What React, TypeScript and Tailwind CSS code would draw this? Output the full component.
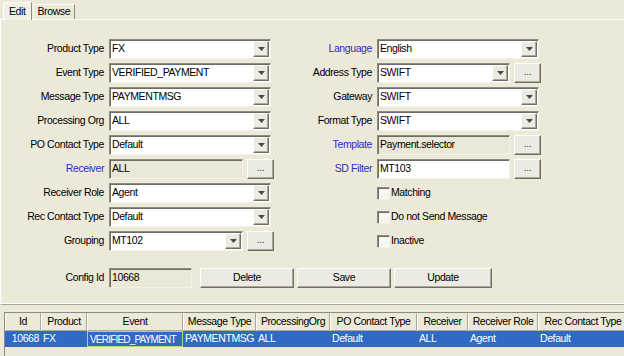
import React from 'react';

const sunken =
  'border border-t-[#8f8c7e] border-l-[#8f8c7e] border-r-[#f4f2e8] border-b-[#f4f2e8] shadow-[inset_1px_1px_0_#6f6d62]';
const raised =
  'border border-t-white border-l-white border-r-[#716f64] border-b-[#716f64] shadow-[inset_-1px_-1px_0_#aca899]';

function Arrow() {
  return (
    <div className={`h-[16px] w-[16px] mr-px bg-[#ecebe3] flex items-center justify-center ${raised}`}>
      <svg width="7" height="4" viewBox="0 0 7 4">
        <path d="M0 0h7L3.5 4z" fill="#4a4a4a" />
      </svg>
    </div>
  );
}

function Combo({ value, width }: { value: string; width: string }) {
  return (
    <div className={`h-5 ${width} bg-white flex items-center ${sunken}`}>
      <span className="flex-1 pl-[2px] whitespace-nowrap overflow-hidden">{value}</span>
      <Arrow />
    </div>
  );
}

function TextBox({ value, width, gray }: { value: string; width: string; gray?: boolean }) {
  return (
    <div className={`h-5 ${width} flex items-center pl-[2px] ${gray ? 'bg-[#ebe8d7]' : 'bg-white'} ${sunken}`}>
      {value}
    </div>
  );
}

function Dots() {
  return (
    <div className={`h-5 w-[27px] bg-[#ecebe3] flex items-center justify-center text-[#444] leading-none pb-[3px] ${raised}`}>
      ...
    </div>
  );
}

function Row({
  label,
  blue,
  labelWidth,
  children,
}: {
  label: string;
  blue?: boolean;
  labelWidth: string;
  children: React.ReactNode;
}) {
  return (
    <div className="flex items-center h-5">
      <div className={`${labelWidth} text-right whitespace-nowrap ${blue ? 'text-[#2b2bd0]' : 'text-black'}`}>{label}</div>
      <div className="flex items-center gap-1 ml-[5px]">{children}</div>
    </div>
  );
}

function Check({ label }: { label: string }) {
  return (
    <div className="flex items-center h-5 pl-[86px]">
      <div className={`w-[13px] h-[13px] bg-[#f7f6f1] ${sunken}`} />
      <span className="ml-px">{label}</span>
    </div>
  );
}

function BigButton({ label, width }: { label: string; width: string }) {
  return (
    <div className={`h-5 ${width} bg-[#ecebe3] flex items-center justify-center ${raised}`}>{label}</div>
  );
}

const columns = [
  { name: 'Id', w: 'w-[36px]', value: '10668', right: true },
  { name: 'Product', w: 'w-[46px]', value: 'FX' },
  { name: 'Event', w: 'w-[96px]', value: 'VERIFIED_PAYMENT', focus: true },
  { name: 'Message Type', w: 'w-[73px]', value: 'PAYMENTMSG' },
  { name: 'ProcessingOrg', w: 'w-[74px]', value: 'ALL' },
  { name: 'PO Contact Type', w: 'w-[87px]', value: 'Default' },
  { name: 'Receiver', w: 'w-[51px]', value: 'ALL' },
  { name: 'Receiver Role', w: 'w-[70px]', value: 'Agent' },
  { name: 'Rec Contact Type', w: 'w-[90px]', value: 'Default' },
];

export default function App() {
  return (
    <div className="w-[624px] h-[356px] overflow-hidden bg-[#ece9d8] text-black text-[10.5px] tracking-[-0.4px] font-['Liberation_Sans',Arial,sans-serif]">
      {/* tabs */}
      <div className="h-[19px] flex items-end pl-[3px]">
        <div className="h-[18px] px-[5px] flex items-center border-t border-l border-white border-r border-r-[#8f8c7e] bg-[#f3f1e6] relative top-px">
          Edit
        </div>
        <div className="h-[15px] px-[4px] ml-px flex items-center border-t border-l border-white border-r border-r-[#8f8c7e]">
          Browse
        </div>
      </div>

      {/* panel */}
      <div className="h-[286px] border-t border-t-white border-l border-l-white border-b border-b-[#aca899] shadow-[inset_0_-1px_0_#fff]">
        <div className="flex pt-[19px]">
          <div className="w-[290px] flex flex-col gap-1">
            <Row label="Product Type" labelWidth="w-[103px]">
              <Combo value="FX" width="w-[162px]" />
            </Row>
            <Row label="Event Type" labelWidth="w-[103px]">
              <Combo value="VERIFIED_PAYMENT" width="w-[162px]" />
            </Row>
            <Row label="Message Type" labelWidth="w-[103px]">
              <Combo value="PAYMENTMSG" width="w-[162px]" />
            </Row>
            <Row label="Processing Org" labelWidth="w-[103px]">
              <Combo value="ALL" width="w-[162px]" />
            </Row>
            <Row label="PO Contact Type" labelWidth="w-[103px]">
              <Combo value="Default" width="w-[162px]" />
            </Row>
            <Row label="Receiver" blue labelWidth="w-[103px]">
              <TextBox value="ALL" width="w-[134px]" gray />
              <Dots />
            </Row>
            <Row label="Receiver Role" labelWidth="w-[103px]">
              <Combo value="Agent" width="w-[162px]" />
            </Row>
            <Row label="Rec Contact Type" labelWidth="w-[103px]">
              <Combo value="Default" width="w-[162px]" />
            </Row>
            <Row label="Grouping" labelWidth="w-[103px]">
              <Combo value="MT102" width="w-[134px]" />
              <Dots />
            </Row>
          </div>

          <div className="flex-1 flex flex-col gap-1">
            <Row label="Language" blue labelWidth="w-[81px]">
              <Combo value="English" width="w-[162px]" />
            </Row>
            <Row label="Address Type" labelWidth="w-[81px]">
              <Combo value="SWIFT" width="w-[133px]" />
              <Dots />
            </Row>
            <Row label="Gateway" labelWidth="w-[81px]">
              <Combo value="SWIFT" width="w-[162px]" />
            </Row>
            <Row label="Format Type" labelWidth="w-[81px]">
              <Combo value="SWIFT" width="w-[162px]" />
            </Row>
            <Row label="Template" blue labelWidth="w-[81px]">
              <TextBox value="Payment.selector" width="w-[133px]" gray />
              <Dots />
            </Row>
            <Row label="SD Filter" blue labelWidth="w-[81px]">
              <TextBox value="MT103" width="w-[133px]" />
              <Dots />
            </Row>
            <Check label="Matching" />
            <Check label="Do not Send Message" />
            <Check label="Inactive" />
          </div>
        </div>

        {/* config row */}
        <div className="flex items-center h-5 mt-[17px]">
          <div className="w-[103px] text-right">Config Id</div>
          <div className="ml-[5px]">
            <TextBox value="10668" width="w-[83px]" gray />
          </div>
          <div className="ml-[8px] flex gap-[3px]">
            <BigButton label="Delete" width="w-[94px]" />
            <BigButton label="Save" width="w-[94px]" />
            <BigButton label="Update" width="w-[98px]" />
          </div>
        </div>
      </div>

      {/* table */}
      <div className="mt-[7px] ml-[4px] border-l border-t border-[#8f8c7e] h-[60px] w-[700px]">
        <div className="flex h-[18px]">
          {columns.map((c) => (
            <div
              key={c.name}
              className={`${c.w} shrink-0 flex items-center justify-center whitespace-nowrap overflow-hidden border-l border-l-white border-r border-r-[#aca899] border-b border-b-[#aca899]`}
            >
              {c.name}
            </div>
          ))}
        </div>
        <div className="flex h-[16px] bg-[#316ac5] text-white">
          {columns.map((c) => (
            <div
              key={c.name}
              className={`${c.w} shrink-0 flex items-center whitespace-nowrap overflow-hidden ${
                c.right ? 'justify-end pr-[2px]' : 'pl-[2px]'
              } ${c.focus ? 'border border-[#b9d37a] pl-0 text-[10px] tracking-[-0.8px]' : ''}`}
            >
              {c.value}
            </div>
          ))}
        </div>
      </div>
    </div>
  );
}
